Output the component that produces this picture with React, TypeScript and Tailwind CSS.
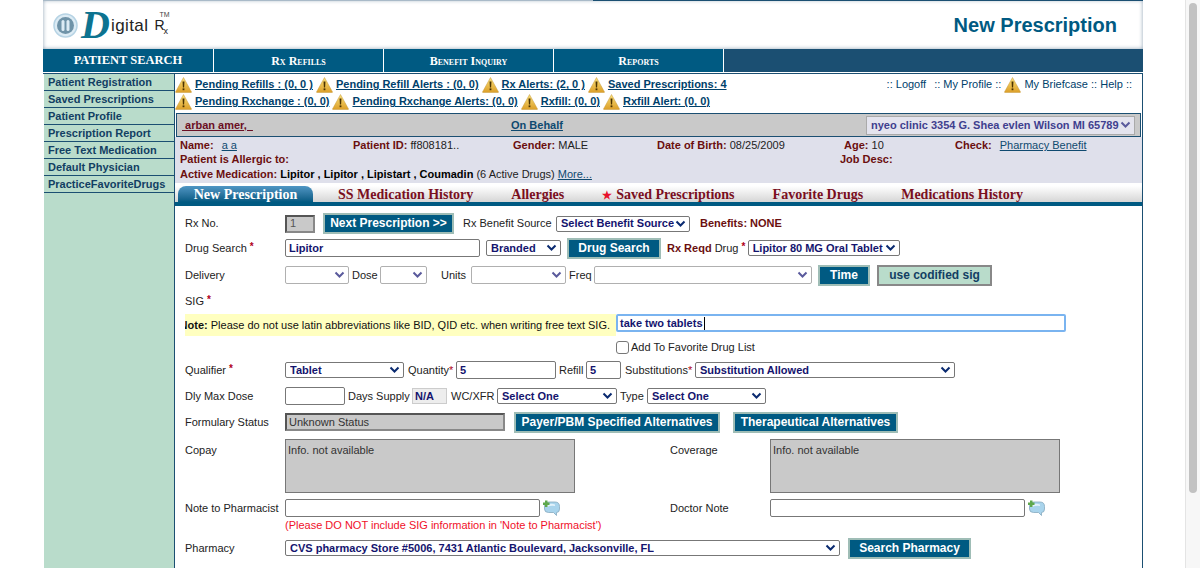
import React from 'react';

const WarnIcon = () => (
  <svg width="17" height="16" viewBox="0 0 17 16" className="shrink-0">
    <defs>
      <linearGradient id="warn" x1="0" y1="0" x2="0" y2="1">
        <stop offset="0" stopColor="#f9e07a" />
        <stop offset="1" stopColor="#dc9f28" />
      </linearGradient>
    </defs>
    <path d="M8.5 0.5 L16.5 15 Q16.5 15.5 16 15.5 L1 15.5 Q0.5 15.5 0.5 15 Z" fill="url(#warn)" stroke="#c89a3c" strokeWidth="0.5" strokeLinejoin="round" />
    <path d="M7.5 4.5 h2 l-0.4 6 h-1.2 z" fill="#4a3200" />
    <rect x="7.6" y="11.4" width="1.8" height="1.8" fill="#4a3200" />
  </svg>
);

const Chevron = ({ faint = false }: { faint?: boolean }) => (
  <svg width="11" height="8" viewBox="0 0 11 8" className="shrink-0">
    <path d="M1.5 1.5 L5.5 5.5 L9.5 1.5" fill="none" stroke={faint ? '#5a5a9c' : '#0a2a70'} strokeWidth="2" />
  </svg>
);

const NoteAdd = () => (
  <svg width="17" height="16" viewBox="0 0 17 16" className="ml-[3px] shrink-0">
    <path d="M1.5 6 Q1.5 2 5.5 2 H12 Q16.5 2 16.5 6.5 V9 Q16.5 12.5 13.5 12.5 V15.5 L10.5 12.5 H5.5 Q1.5 12.5 1.5 9 Z" fill="#a9d4ec" stroke="#86a9bf" strokeWidth="0.8" />
    <path d="M4 5 Q8 3 12 4.5 L12 6 Q8 5 4 7 Z" fill="#e2f2fb" />
    <path d="M0 2.5 H2 V0.5 H4.5 V2.5 H6.5 V5 H4.5 V7 H2 V5 H0 Z" fill="#5fa84c" />
  </svg>
);

const LogoMark = () => (
  <svg width="25" height="25" viewBox="0 0 25 25" className="shrink-0">
    <circle cx="12.5" cy="12.5" r="11.5" fill="#dcebf4" stroke="#b6d3e4" strokeWidth="1.5" />
    <circle cx="12.5" cy="12.5" r="8.5" fill="#6f93a8" />
    <rect x="8.5" y="7" width="3" height="11" rx="1.5" fill="#dcebf4" />
    <rect x="13.5" y="7" width="3" height="11" rx="1.5" fill="#dcebf4" />
  </svg>
);

const Sel = ({ w, text = '', faint = false, className = '' }: { w: string; text?: string; faint?: boolean; className?: string }) => (
  <div
    className={`flex shrink-0 items-center justify-between rounded-[2px] border bg-white pr-[3px] pl-[4px] text-[11px] font-bold text-[#14146e] ${faint ? 'h-[18px] border-[#b0b0b0]' : 'h-[16px] border-[#777]'} ${w} ${className}`}
  >
    <span className="truncate">{text}</span>
    <Chevron faint={faint} />
  </div>
);

const Field = ({ w, text = '', className = '' }: { w: string; text?: string; className?: string }) => (
  <div
    className={`flex h-[18px] shrink-0 items-center rounded-[2px] border border-[#777] bg-white px-[3px] text-[11px] font-bold text-[#14146e] ${w} ${className}`}
  >
    {text}
  </div>
);

const Btn = ({ w, text, className = '' }: { w: string; text: string; className?: string }) => (
  <div
    className={`flex h-[21px] shrink-0 items-center justify-center border-2 border-[#9fbdb6] bg-[#005a82] pb-[1px] text-[12px] font-bold whitespace-nowrap text-white ${w} ${className}`}
  >
    {text}
  </div>
);

const Req = () => <span className="ml-[3px] align-[2px] text-[10px] leading-none font-bold text-[#b00020]">*</span>;

const Label = ({ children, className = 'w-[100px]' }: { children: React.ReactNode; className?: string }) => (
  <div className={`shrink-0 text-[11px] text-[#222] ${className}`}>{children}</div>
);

const AlertLink = ({ text }: { text: string }) => (
  <div className="flex items-center gap-[3px]">
    <WarnIcon />
    <a className="block whitespace-nowrap text-[11px] font-bold text-[#00416b] underline">{text}</a>
  </div>
);

const MaroonTab = ({ text, className }: { text: string; className: string }) => (
  <span className={`text-[14px] font-bold whitespace-nowrap text-[#7a0f1e] ${className}`}>{text}</span>
);

const sideItems = [
  'Patient Registration',
  'Saved Prescriptions',
  'Patient Profile',
  'Prescription Report',
  'Free Text Medication',
  'Default Physician',
  'PracticeFavoriteDrugs',
];

const navItems = ['Rx Refills', 'Benefit Inquiry', 'Reports'];

export default function App() {
  return (
    <div className="flex h-[568px] overflow-hidden bg-white font-['Liberation_Sans',Arial,sans-serif]">
      <div className="ml-[43px] flex w-[1100px] shrink-0 flex-col">
        {/* Header */}
        <header className="flex h-[49px] shrink-0 flex-col bg-white shadow-[inset_0_0_4px_#8fa3b5]">
          <div className="flex h-[1px] justify-end bg-[#a9bac8]">
            <div className="w-[550px] bg-[#1b4f72]" />
          </div>
          <div className="flex flex-1 items-center justify-between pr-[26px] pl-[10px]">
            <div className="flex items-center">
              <LogoMark />
              <span className="ml-[3px] w-[30px] font-['Liberation_Serif',serif] text-[40px] leading-none font-bold text-[#0d7390] italic">D</span>
              <span className="text-[17px] leading-none tracking-[0.4px] text-[#222]">igital</span>
              <span className="ml-[6px] w-[9px] text-[14px] leading-none text-[#222]">R</span>
              <span className="mt-[12px] w-[5px] text-[9px] leading-none text-[#222]">x</span>
              <span className="mb-[22px] -ml-[9px] text-[7px] leading-none text-[#444]">TM</span>
            </div>
            <h1 className="text-[20px] font-bold text-[#005a82]">New Prescription</h1>
          </div>
        </header>

        {/* Top nav */}
        <nav className="flex h-[23px] shrink-0 bg-[#005a82] font-['Liberation_Serif',serif] font-bold text-white">
          <div className="flex w-[171px] items-center justify-center border-r border-white text-[12.5px]">PATIENT SEARCH</div>
          {navItems.map((item) => (
            <div key={item} className="flex w-[170px] items-center justify-center border-r border-white text-[12px] [font-variant:small-caps]">
              {item}
            </div>
          ))}
          <div className="flex-1 bg-[#1b4f72]" />
        </nav>

        <div className="mt-[1px] flex min-h-0 flex-1 border-t border-t-[#1b4f72]">
          {/* Sidebar */}
          <aside className="ml-[1px] w-[130px] shrink-0 bg-[#b9dccb]">
            {sideItems.map((item) => (
              <div key={item} className="flex h-[17px] items-center border-b border-[#1b4f72] pl-[4px] text-[11px] font-bold whitespace-nowrap text-[#123f63]">
                {item}
              </div>
            ))}
          </aside>

          {/* Main panel */}
          <main className="min-w-0 flex-1 border-x border-[#1b4f72] bg-white">
            {/* Alerts */}
            <div className="flex justify-between pt-[2px] pr-[10px]">
              <div>
                <div className="flex h-[17px] items-center gap-[3px]">
                  <AlertLink text="Pending Refills : (0, 0 )" />
                  <AlertLink text="Pending Refill Alerts : (0, 0)" />
                  <AlertLink text="Rx Alerts: (2, 0 )" />
                  <AlertLink text="Saved Prescriptions: 4" />
                </div>
                <div className="flex h-[17px] items-center gap-[3px]">
                  <AlertLink text="Pending Rxchange : (0, 0)" />
                  <AlertLink text="Pending Rxchange Alerts: (0, 0)" />
                  <AlertLink text="Rxfill: (0, 0)" />
                  <AlertLink text="Rxfill Alert: (0, 0)" />
                </div>
              </div>
              <div className="flex h-[17px] items-center text-[11px] whitespace-nowrap text-[#00416b]">
                <span>:: Logoff</span>
                <span className="ml-[8px]">:: My Profile ::</span>
                <span className="mx-[3px]"><WarnIcon /></span>
                <span>My Briefcase :: Help ::</span>
              </div>
            </div>

            {/* Patient bar */}
            <div className="mt-[3px] ml-[1px] flex h-[24px] w-[965px] items-center border border-[#1b4f72] bg-[#c9c9c9] pr-[5px] text-[11px] font-bold">
              <a className="ml-[5px] w-[329px] text-[#6b0f24] underline">&nbsp;arban amer,&nbsp;&nbsp;</a>
              <a className="text-[#0f4a70] underline">On Behalf</a>
              <div className="ml-auto flex h-[19px] w-[269px] items-center justify-between border border-[#aaa] bg-[#e4e4ee] pr-[3px] pl-[4px] whitespace-nowrap text-[#3f3f8f]">
                <span>nyeo clinic 3354 G. Shea evlen Wilson MI 65789</span>
                <Chevron faint />
              </div>
            </div>

            {/* Patient info */}
            <div className="h-[46px] bg-[#dfe0eb] pl-[5px] text-[11px] text-[#222]">
              <div className="flex h-[15px] items-center pt-[2px]">
                <div className="w-[173px]"><b className="text-[#6b0f0f]">Name:</b><a className="ml-[8px] text-[#0f4a70] underline">a a</a></div>
                <div className="w-[160px]"><b className="text-[#6b0f0f]">Patient ID:</b> ff808181..</div>
                <div className="w-[144px]"><b className="text-[#6b0f0f]">Gender:</b> MALE</div>
                <div className="w-[187px]"><b className="text-[#6b0f0f]">Date of Birth:</b> 08/25/2009</div>
                <div className="w-[111px]"><b className="text-[#6b0f0f]">Age:</b> 10</div>
                <div><b className="text-[#6b0f0f]">Check:</b><a className="ml-[8px] text-[#0f4a70] underline">Pharmacy Benefit</a></div>
              </div>
              <div className="flex h-[15px] items-center">
                <b className="w-[660px] text-[#6b0f0f]">Patient is Allergic to:</b>
                <b className="text-[#6b0f0f]">Job Desc:</b>
              </div>
              <div className="flex h-[15px] items-center whitespace-pre">
                <b className="text-[#6b0f0f]">Active Medication: </b>
                <b className="text-black">Lipitor , Lipitor , Lipistart , Coumadin</b>
                <span> (6 Active Drugs) </span>
                <a className="text-[#0f4a70] underline">More...</a>
              </div>
            </div>

            {/* Tabs */}
            <div className="mt-[3px] flex h-[20px] items-center border-b-4 border-[#005a82] bg-gradient-to-b from-white to-[#d6d6d6] pl-[3px] font-['Liberation_Serif',serif]">
              <div className="flex h-[16px] w-[135px] items-center justify-center rounded-t-[8px] bg-gradient-to-b from-[#4f96c4] to-[#005a82] text-[14px] font-bold text-white">New Prescription</div>
              <MaroonTab text="SS Medication History" className="ml-[25px]" />
              <MaroonTab text="Allergies" className="ml-[38px]" />
              <span className="mt-[3px] ml-[38px] text-[11px] leading-none font-bold text-[#e8102a]">★</span>
              <MaroonTab text="Saved Prescriptions" className="ml-[4px]" />
              <MaroonTab text="Favorite Drugs" className="ml-[38px]" />
              <MaroonTab text="Medications History" className="ml-[38px]" />
            </div>

            {/* Form */}
            <div className="pl-[10px]">
              <div className="mt-[6px] flex h-[23px] items-center">
                <Label>Rx No.</Label>
                <div className="flex h-[18px] w-[30px] items-center border-2 border-[#555] border-r-[#888] border-b-[#888] bg-[#c9c9c9] pl-[3px] text-[11px] text-[#555]">1</div>
                <Btn w="w-[131px]" text="Next Prescription >>" className="ml-[8px]" />
                <Label className="ml-[9px] w-[93px]">Rx Benefit Source</Label>
                <Sel w="w-[134px]" text="Select Benefit Source" />
                <b className="ml-[10px] text-[11px] text-[#6b0f0f]">Benefits: NONE</b>
              </div>
              <div className="mt-[1px] flex h-[24px] items-center">
                <Label>Drug Search<Req /></Label>
                <Field w="w-[195px]" text="Lipitor" />
                <Sel w="w-[75px]" text="Branded" className="ml-[6px]" />
                <Btn w="w-[94px]" text="Drug Search" className="ml-[6px]" />
                <b className="ml-[6px] text-[11px] text-[#6b0f0f]">Rx Reqd</b>
                <Label className="ml-[3px] w-[33px]">Drug<Req /></Label>
                <Sel w="w-[152px]" text="Lipitor 80 MG Oral Tablet" />
              </div>
              <div className="mt-[4px] flex h-[22px] items-center">
                <Label>Delivery</Label>
                <Sel w="w-[64px]" faint />
                <Label className="ml-[3px] w-[28px]">Dose</Label>
                <Sel w="w-[47px]" faint />
                <Label className="ml-[14px] w-[30px]">Units</Label>
                <Sel w="w-[95px]" faint />
                <Label className="ml-[3px] w-[25px]">Freq</Label>
                <Sel w="w-[218px]" faint />
                <Btn w="w-[52px]" text="Time" className="ml-[6px]" />
                <div className="ml-[7px] flex h-[21px] w-[115px] items-center justify-center border-2 border-[#888] bg-[#b9dccb] pb-[1px] text-[12px] font-bold text-[#123f63]">use codified sig</div>
              </div>
              <div className="mt-[4px] flex h-[22px] items-center">
                <Label>SIG<Req /></Label>
              </div>
              <div className="mt-[2px] flex h-[22px]">
                <div className="flex w-[431px] shrink-0 items-center justify-end overflow-hidden bg-[#ffffc0] pr-[6px] text-[11px] whitespace-nowrap text-[#111]">
                  <span><b>Note:</b> Please do not use latin abbreviations like BID, QID etc. when writing free text SIG.</span>
                </div>
                <div className="flex h-[18px] w-[450px] items-center rounded-[2px] border-2 border-[#7ab4f0] bg-white pl-[2px] text-[11px] font-bold text-[#14146e]">
                  take two tablets<span className="ml-[1px] h-[13px] w-px bg-black" />
                </div>
              </div>
              <div className="mt-[1px] ml-[431px] flex h-[20px] items-center">
                <div className="h-[13px] w-[13px] rounded-[3px] border border-[#777] bg-white" />
                <span className="ml-[2px] text-[11px] text-[#222]">Add To Favorite Drug List</span>
              </div>
              <div className="mt-[2px] flex h-[22px] items-center">
                <Label>Qualifier<Req /></Label>
                <Sel w="w-[119px]" text="Tablet" />
                <Label className="ml-[4px] w-[48px]">Quantity<span className="text-[#b00020]">*</span></Label>
                <Field w="w-[100px]" text="5" />
                <Label className="ml-[3px] w-[27px]">Refill</Label>
                <Field w="w-[35px]" text="5" />
                <Label className="ml-[4px] w-[70px]">Substitutions<span className="text-[#b00020]">*</span></Label>
                <Sel w="w-[260px]" text="Substitution Allowed" />
              </div>
              <div className="mt-[4px] flex h-[22px] items-center">
                <Label>Dly Max Dose</Label>
                <Field w="w-[60px]" />
                <Label className="ml-[3px] w-[64px]">Days Supply</Label>
                <div className="flex h-[16px] w-[35px] items-center bg-[#ededed] pl-[3px] text-[11px] font-bold text-[#14146e] ring-1 ring-[#ccc] ring-inset">N/A</div>
                <Label className="ml-[4px] w-[46px]">WC/XFR</Label>
                <Sel w="w-[120px]" text="Select One" />
                <Label className="ml-[3px] w-[27px]">Type</Label>
                <Sel w="w-[119px]" text="Select One" />
              </div>
              <div className="mt-[4px] flex h-[22px] items-center">
                <Label>Formulary Status</Label>
                <div className="flex h-[18px] w-[220px] items-center border-2 border-[#555] border-r-[#888] border-b-[#888] bg-[#c9c9c9] pl-[2px] text-[11px] text-[#333]">Unknown Status</div>
                <Btn w="w-[206px]" text="Payer/PBM Specified Alternatives" className="ml-[9px]" />
                <Btn w="w-[165px]" text="Therapeutical Alternatives" className="ml-[13px]" />
              </div>
              <div className="mt-[6px] flex h-[54px]">
                <Label className="w-[100px] pt-[3px]">Copay</Label>
                <div className="h-[54px] w-[290px] border border-[#777] bg-[#c9c9c9] pt-[2px] pl-[2px] text-[11px] text-[#333]">Info. not available</div>
                <Label className="ml-[95px] w-[100px] pt-[3px]">Coverage</Label>
                <div className="h-[54px] w-[290px] border border-[#777] bg-[#c9c9c9] pt-[2px] pl-[2px] text-[11px] text-[#333]">Info. not available</div>
              </div>
              <div className="mt-[6px] flex h-[18px] items-center">
                <Label>Note to Pharmacist</Label>
                <Field w="w-[255px]" />
                <NoteAdd />
                <Label className="ml-[110px] w-[100px]">Doctor Note</Label>
                <Field w="w-[255px]" />
                <NoteAdd />
              </div>
              <div className="mt-[1px] ml-[100px] h-[15px] text-[11px] leading-[15px] text-[#f0102a]">(Please DO NOT include SIG information in 'Note to Pharmacist')</div>
              <div className="mt-[4px] flex h-[22px] items-center">
                <Label>Pharmacy</Label>
                <Sel w="w-[555px]" text="CVS pharmacy Store #5006, 7431 Atlantic Boulevard, Jacksonville, FL" />
                <Btn w="w-[123px]" text="Search Pharmacy" className="ml-[8px]" />
              </div>
            </div>
          </main>
        </div>
      </div>

      {/* Scrollbar */}
      <div className="ml-auto flex w-[15px] shrink-0 justify-center border-l border-[#e4e4e4] bg-[#f7f7f7] pt-[3px]">
        <div className="h-[490px] w-[8px] rounded-full bg-[#c2c2c2]" />
      </div>
    </div>
  );
}
